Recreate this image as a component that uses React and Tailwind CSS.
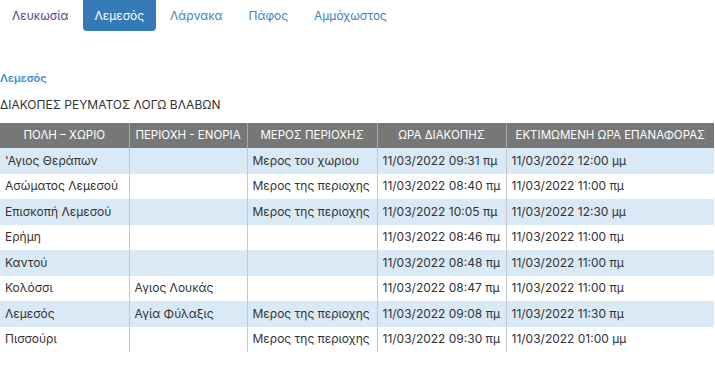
const rows = [
  ["'Αγιος Θεράπων", "", "Μερος του χωριου", "11/03/2022 09:31 πμ", "11/03/2022 12:00 μμ"],
  ["Ασώματος Λεμεσού", "", "Μερος της περιοχης", "11/03/2022 08:40 πμ", "11/03/2022 11:00 πμ"],
  ["Επισκοπή Λεμεσού", "", "Μερος της περιοχης", "11/03/2022 10:05 πμ", "11/03/2022 12:30 μμ"],
  ["Ερήμη", "", "", "11/03/2022 08:46 πμ", "11/03/2022 11:00 πμ"],
  ["Καντού", "", "", "11/03/2022 08:48 πμ", "11/03/2022 11:00 πμ"],
  ["Κολόσσι", "Αγιος Λουκάς", "", "11/03/2022 08:47 πμ", "11/03/2022 11:00 πμ"],
  ["Λεμεσός", "Αγία Φύλαξις", "Μερος της περιοχης", "11/03/2022 09:08 πμ", "11/03/2022 11:30 πμ"],
  ["Πισσούρι", "", "Μερος της περιοχης", "11/03/2022 09:30 πμ", "11/03/2022 01:00 μμ"],
];
const heads = ["ΠΟΛΗ – ΧΩΡΙΟ", "ΠΕΡΙΟΧΗ - ΕΝΟΡΙΑ", "ΜΕΡΟΣ ΠΕΡΙΟΧΗΣ", "ΩΡΑ ΔΙΑΚΟΠΗΣ", "ΕΚΤΙΜΩΜΕΝΗ ΩΡΑ ΕΠΑΝΑΦΟΡΑΣ"];
const widths = ["w-[129px]", "w-[118px]", "w-[130px]", "w-[129px]", "w-[208px]"];
const tabs = ["Λευκωσία", "Λεμεσός", "Λάρνακα", "Πάφος", "Αμμόχωστος"];

export default function App() {
  return (
    <div className="w-[715px] h-[385px] bg-white text-[12px] text-[#333]" style={{ fontFamily: "Inter, 'Noto Sans', sans-serif" }}>
      <div className="flex gap-[2px] h-[31px]">
        {tabs.map((t, i) => (
          <div
            key={t}
            className={
              "h-[31px] px-[12px] flex items-center rounded-b-[4px] " +
              (i === 1 ? "bg-[#337ab7] text-white" : i === 0 ? "text-[#5a3b86]" : "text-[#3f7fc4]")
            }
          >
            {t}
          </div>
        ))}
      </div>
      <div className="pt-[40px] text-[11px] font-semibold text-[#3c8fd6] leading-[14px]">Λεμεσός</div>
      <div className="pt-[13px] leading-[14px]">ΔΙΑΚΟΠΕΣ ΡΕΥΜΑΤΟΣ ΛΟΓΩ ΒΛΑΒΩΝ</div>
      <table className="mt-[11px] w-[714px] border-collapse table-fixed">
        <thead>
          <tr className="h-[25px] bg-[#777777] text-white">
            {heads.map((h, i) => (
              <th key={h} className={widths[i] + " p-0 font-normal text-[11.5px] text-center whitespace-nowrap " + (i < 4 ? "border-r border-[#a8a8a8]" : "")}>
                {h}
              </th>
            ))}
          </tr>
        </thead>
        <tbody>
          {rows.map((r, ri) => (
            <tr key={ri} className={"h-[25.5px] " + (ri % 2 === 0 ? "bg-[#d9e9f5]" : "bg-white")}>
              {r.map((c, ci) => (
                <td key={ci} className={"py-0 px-[5px] leading-[14px] text-left whitespace-nowrap " + (ci < 4 ? "border-r border-[#c8c8c8]" : "")}>
                  {c}
                </td>
              ))}
            </tr>
          ))}
        </tbody>
      </table>
    </div>
  );
}
